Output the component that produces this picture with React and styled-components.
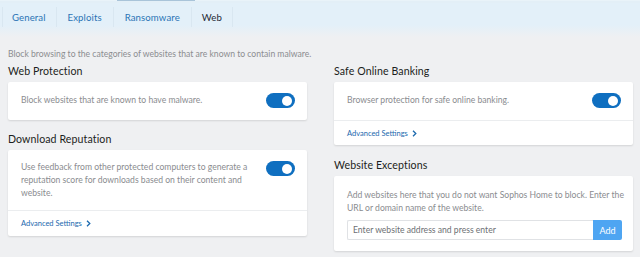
import React from "react";
import styled, { createGlobalStyle } from "styled-components";

const Global = createGlobalStyle`
  html, body { margin: 0; padding: 0; }
  body {
    width: 640px; height: 257px; overflow: hidden;
    background: #eff0f2;
    font-family: Lato, "Open Sans", sans-serif;
  }
`;

const Page = styled.div`
  width: 640px;
  height: 257px;
  background: #eff0f2;
`;

const TopStrip = styled.div`
  height: 3px;
  background: #e3eff7;
  border-top: 1px solid #e9f3f9;
  box-sizing: border-box;
  position: relative;
`;

const TopMark = styled.div`
  position: absolute;
  left: 117px;
  top: -1px;
  width: 78px;
  height: 1px;
  background: #a9c4d9;
`;

const TabBar = styled.div`
  height: 34px;
  display: flex;
  align-items: flex-start;
  padding-top: 4px;
  padding-left: 2px;
  box-sizing: border-box;
  background: linear-gradient(to bottom, #e3f0f9 0px, #e3f0f9 22px, #eff0f2 34px);
`;

const Tab = styled.div`
  height: 20px;
  display: flex;
  align-items: center;
  padding: 0 ${(p) => p.$r}px 0 ${(p) => p.$l}px;
  font-size: 9.6px;
  letter-spacing: 0.1px;
  color: ${(p) => (p.$active ? "#1f2a36" : "#2b74b5")};
  border-left: 1px solid #d9e7f1;
  &:last-child { border-right: 1px solid #d9e7f1; }
`;

const Intro = styled.div`
  padding: 11px 8px 0;
  font-size: 8.6px;
  color: #8b8d90;
  line-height: 12px;
`;

const Columns = styled.div`
  display: grid;
  grid-template-columns: 299px 299px;
  column-gap: 27px;
  padding: 0 7px 0 8px;
`;

const Column = styled.div`
  display: flex;
  flex-direction: column;
`;

const Heading = styled.div`
  font-size: 10.6px;
  color: #1c1e21;
  line-height: 14px;
  letter-spacing: 0.1px;
  margin-top: ${(p) => p.$top}px;
  margin-bottom: 4px;
`;

const Card = styled.div`
  background: #fff;
  border-radius: 2px;
  box-shadow: 0 1px 2px rgba(0, 0, 0, 0.12);
`;

const CardBody = styled.div`
  display: flex;
  align-items: flex-start;
  justify-content: space-between;
  padding: ${(p) => p.$pad || "12px 12px 11px 13px"};
`;

const StackBody = styled.div`
  padding: 13px 9px 11px 13px;
`;

const CardText = styled.div`
  font-size: 8.6px;
  color: #8a8c8f;
  line-height: 13px;
  max-width: ${(p) => p.$max || "none"};
`;

const ToggleWrap = styled.div`
  width: 29px;
  height: 15px;
  border-radius: 8px;
  background: #0f6fc0;
  position: relative;
  flex-shrink: 0;
  margin-top: ${(p) => p.$mt || 0}px;
  &::after {
    content: "";
    position: absolute;
    right: 3px;
    top: 2.5px;
    width: 10px;
    height: 10px;
    border-radius: 50%;
    background: #fff;
  }
`;

const CardFooter = styled.div`
  border-top: 1px solid #ebedef;
  padding: 0 13px;
  height: ${(p) => p.$h || 24}px;
  display: flex;
  align-items: center;
`;

const Link = styled.a`
  font-size: 7.5px;
  color: #1b69ae;
  display: inline-flex;
  align-items: center;
  gap: 4px;
  text-decoration: none;
`;

const InputRow = styled.div`
  display: flex;
  margin-top: 5px;
  margin-right: 2px;
  height: 20px;
`;

const Input = styled.input`
  flex: 1;
  min-width: 0;
  border: 1px solid #e0e2e5;
  border-right: none;
  border-radius: 2px 0 0 2px;
  padding: 0 5px;
  font-family: Lato, "Open Sans", sans-serif;
  font-size: 8.6px;
  color: #333;
  outline: none;
  &::placeholder { color: #6d7074; }
`;

const AddButton = styled.button`
  width: 29px;
  border: none;
  border-radius: 0 2px 2px 0;
  background: #4ea5f2;
  color: #fff;
  font-family: Lato, "Open Sans", sans-serif;
  font-size: 9px;
  padding: 0;
`;

const Chevron = () => (
  <svg width="5" height="7" viewBox="0 0 5 7">
    <path d="M1 0.8 L3.8 3.5 L1 6.2" fill="none" stroke="#1b69ae" strokeWidth="1.3" />
  </svg>
);

export default function App() {
  return (
    <Page>
      <Global />
      <TopStrip>
        <TopMark />
      </TopStrip>
      <TabBar>
        <Tab $l={9} $r={10}>General</Tab>
        <Tab $l={11} $r={11}>Exploits</Tab>
        <Tab $l={11} $r={11}>Ransomware</Tab>
        <Tab $l={10} $r={10} $active>Web</Tab>
      </TabBar>
      <Intro>Block browsing to the categories of websites that are known to contain malware.</Intro>
      <Columns>
        <Column>
          <Heading $top={4}>Web Protection</Heading>
          <Card>
            <CardBody $pad="12px 12px 12px 13px">
              <CardText>Block websites that are known to have malware.</CardText>
              <ToggleWrap $mt={-1} />
            </CardBody>
          </Card>
          <Heading $top={12}>Download Reputation</Heading>
          <Card>
            <CardBody $pad="11px 12px 10px 13px">
              <CardText $max="236px">
                Use feedback from other protected computers to generate a reputation score for downloads based on their content and website.
              </CardText>
              <ToggleWrap />
            </CardBody>
            <CardFooter $h={25}>
              <Link>Advanced Settings <Chevron /></Link>
            </CardFooter>
          </Card>
        </Column>
        <Column>
          <Heading $top={4}>Safe Online Banking</Heading>
          <Card>
            <CardBody $pad="12px 12px 12px 13px">
              <CardText>Browser protection for safe online banking.</CardText>
              <ToggleWrap $mt={-1} />
            </CardBody>
            <CardFooter $h={24}>
              <Link>Advanced Settings <Chevron /></Link>
            </CardFooter>
          </Card>
          <Heading $top={13}>Website Exceptions</Heading>
          <Card>
            <StackBody>
              <CardText>
                Add websites here that you do not want Sophos Home to block. Enter the URL or domain name of the website.
              </CardText>
              <InputRow>
                <Input placeholder="Enter website address and press enter" />
                <AddButton>Add</AddButton>
              </InputRow>
            </StackBody>
          </Card>
        </Column>
      </Columns>
    </Page>
  );
}
